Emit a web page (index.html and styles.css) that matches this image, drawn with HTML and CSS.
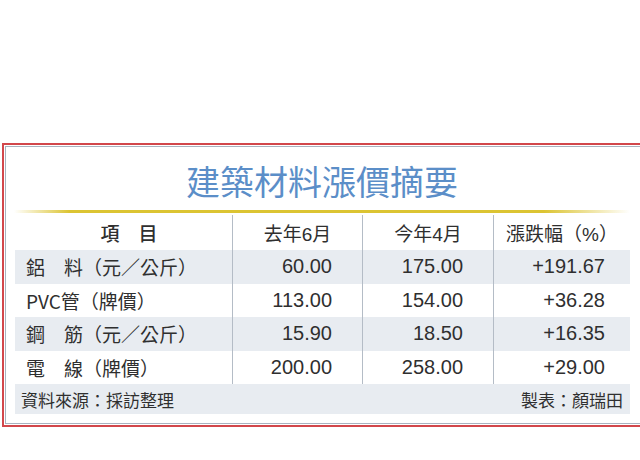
FILE: index.html
```html
<!DOCTYPE html>
<html lang="zh-Hant">
<head>
<meta charset="utf-8">
<link rel="stylesheet" href="styles.css">
</head>
<body>
<div class="frame">
  <div class="inner">
    <h1 class="title">建築材料漲價摘要</h1>
    <div class="rule"></div>
    <div class="table">
      <div class="row head">
        <div class="cell name center">項　目</div>
        <div class="cell center">去年6月</div>
        <div class="cell center">今年4月</div>
        <div class="cell center">漲跌幅（%）</div>
      </div>
      <div class="row shade">
        <div class="cell name">鋁　料（元／公斤）</div>
        <div class="cell num">60.00</div>
        <div class="cell num">175.00</div>
        <div class="cell num last">+191.67</div>
      </div>
      <div class="row">
        <div class="cell name">PVC管（牌價）</div>
        <div class="cell num">113.00</div>
        <div class="cell num">154.00</div>
        <div class="cell num last">+36.28</div>
      </div>
      <div class="row shade">
        <div class="cell name">鋼　筋（元／公斤）</div>
        <div class="cell num">15.90</div>
        <div class="cell num">18.50</div>
        <div class="cell num last">+16.35</div>
      </div>
      <div class="row">
        <div class="cell name">電　線（牌價）</div>
        <div class="cell num">200.00</div>
        <div class="cell num">258.00</div>
        <div class="cell num last">+29.00</div>
      </div>
      <div class="foot">
        <span>資料來源：採訪整理</span>
        <span>製表：顏瑞田</span>
      </div>
    </div>
  </div>
</div>
</body>
</html>
```
FILE: styles.css
```css
html, body {
  margin: 0;
  padding: 0;
  background: #ffffff;
  overflow: hidden;
}
body {
  width: 640px;
  height: 460px;
  font-family: "Liberation Sans", "Noto Sans CJK TC", sans-serif;
  color: #2f2f2f;
}
.frame {
  margin: 143px 0 0 2px;
  border: 2px solid #d2474b;
  border-right: none;
  padding: 1px 0 1px 1px;
  width: 660px;
}
.inner {
  border: 1px solid #a8b2bf;
  border-right: none;
  padding: 0 0 9px 9px;
}
.title {
  margin: 0;
  padding-top: 14px;
  height: 49px;
  width: 614px;
  text-align: center;
  font-family: "Noto Sans CJK TC", sans-serif;
  font-weight: 400;
  font-size: 34px;
  line-height: 40px;
  color: #5b8ec8;
}
.rule {
  height: 3px;
  width: 616px;
  margin-left: -1px;
  background: linear-gradient(to right, rgba(220,196,50,0) 0%, #dcc432 9%, #dcc432 86%, rgba(220,196,50,0) 100%);
}
.table {
  margin-top: 2px;
  width: 615px;
}
.row {
  display: grid;
  grid-template-columns: 217px 130px 131px 137px;
  height: 33.5px;
  align-items: stretch;
}
.row.head {
  height: 35px;
}
.shade {
  background: #e8ecf1;
}
.cell {
  display: flex;
  align-items: center;
  font-size: 20px;
  border-left: 1px solid #b4bcc6;
}
.cell.name {
  border-left: none;
  padding-left: 11px;
  font-family: "Noto Sans CJK TC", sans-serif;
  font-size: 19px;
}
.cell.center {
  justify-content: center;
  font-size: 19px;
  font-family: "Liberation Sans", "Noto Sans CJK TC", sans-serif;
}
.head .name {
  font-weight: 500;
}
.num {
  justify-content: flex-end;
  padding-right: 30px;
}
.num.last {
  padding-right: 25px;
}
.foot {
  display: flex;
  justify-content: space-between;
  align-items: center;
  height: 30px;
  background: #e8ecf1;
  padding: 0 7px 0 6px;
  font-family: "Noto Sans CJK TC", sans-serif;
  font-size: 17px;
}
```
